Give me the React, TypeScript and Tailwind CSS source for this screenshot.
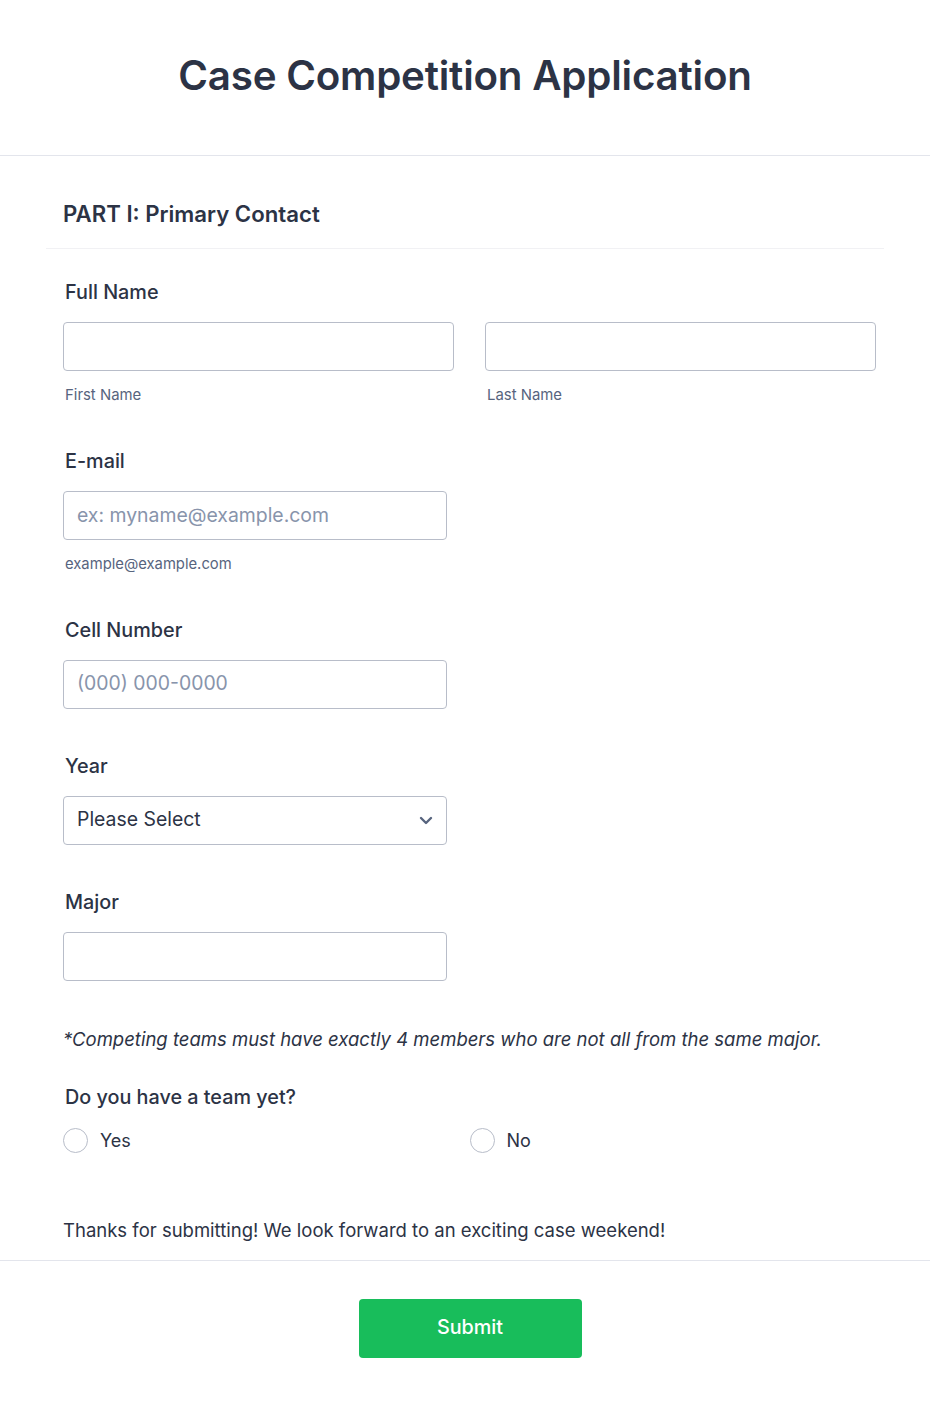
import React from "react";

const font = { fontFamily: "Inter, 'Noto Sans', sans-serif" };

function Label({ children }: { children: React.ReactNode }) {
  return <div className="text-[19.8px] font-medium text-[#2c3345] leading-[24px] pl-[2px]">{children}</div>;
}

function Input({ placeholder, className = "" }: { placeholder?: string; className?: string }) {
  return (
    <div
      className={`h-[49px] border border-[#b8bdc9] rounded-[4px] bg-white flex items-center px-[13px] text-[19.4px] text-[#8894ab] ${className}`}
    >
      {placeholder}
    </div>
  );
}

function Radio({ label }: { label: string }) {
  return (
    <div className="flex items-center gap-[12px]">
      <div className="w-[25px] h-[25px] rounded-full border border-[#b8bdc9] bg-white" />
      <span className="text-[18px] text-[#2c3345]">{label}</span>
    </div>
  );
}

export default function App() {
  return (
    <div className="w-[930px] min-h-[1407px] bg-white" style={font}>
      <div className="h-[156px] border-b border-[#e3e5ec] flex items-center justify-center">
        <h1 className="text-[40.3px] font-semibold text-[#2c3345] tracking-[-0.2px] -mt-[3px]">
          Case Competition Application
        </h1>
      </div>

      <div className="px-[46px]">
        <div className="h-[93px] border-b border-[#f1f1f4] flex items-end pb-[18px] pl-[17px]">
          <div className="text-[22.2px] font-semibold text-[#2c3345]">PART I: Primary Contact</div>
        </div>

        <div className="px-[17px]">
          {/* Full Name */}
          <div className="pt-[31px]">
            <Label>Full Name</Label>
            <div className="grid grid-cols-2 gap-[31px] mt-[18px] w-[813px]">
              <div>
                <Input />
                <div className="text-[14.9px] text-[#57647e] mt-[13px] pl-[2px]">First Name</div>
              </div>
              <div>
                <Input />
                <div className="text-[14.9px] text-[#57647e] mt-[13px] pl-[2px]">Last Name</div>
              </div>
            </div>
          </div>

          {/* Email */}
          <div className="pt-[43px]">
            <Label>E-mail</Label>
            <Input className="w-[384px] mt-[18px]" placeholder="ex: myname@example.com" />
            <div className="text-[14.8px] text-[#57647e] mt-[13px] pl-[2px]">example@example.com</div>
          </div>

          {/* Cell */}
          <div className="pt-[42px]">
            <Label>Cell Number</Label>
            <Input className="w-[384px] mt-[18px]" placeholder="(000) 000-0000" />
          </div>

          {/* Year */}
          <div className="pt-[45px]">
            <Label>Year</Label>
            <div className="w-[384px] mt-[18px] h-[49px] border border-[#b8bdc9] rounded-[4px] bg-white flex items-center justify-between px-[13px] text-[19.4px] text-[#2c3345]">
              <span>Please Select</span>
              <svg width="14" height="9" viewBox="0 0 14 9">
                <path d="M2 2 L7 7 L12 2" fill="none" stroke="#57647e" strokeWidth="2.4" strokeLinecap="round" strokeLinejoin="round" />
              </svg>
            </div>
          </div>

          {/* Major */}
          <div className="pt-[45px]">
            <Label>Major</Label>
            <Input className="w-[384px] mt-[18px]" />
          </div>

          {/* Note */}
          <div className="pt-[46px] text-[18.5px] italic text-[#2c3345] leading-[24px]">
            *Competing teams must have exactly 4 members who are not all from the same major.
          </div>

          {/* Team */}
          <div className="pt-[34px]">
            <Label>Do you have a team yet?</Label>
            <div className="grid grid-cols-2 mt-[18px] w-[813px]">
              <Radio label="Yes" />
              <Radio label="No" />
            </div>
          </div>

          <div className="pt-[64px] pb-[18px] text-[18.5px] text-[#2c3345] leading-[24px]">
            Thanks for submitting! We look forward to an exciting case weekend!
          </div>
        </div>
      </div>

      <div className="border-t border-[#e3e5ec] flex justify-center pt-[38px] pl-[10px]">
        <button className="w-[223px] h-[59px] rounded-[4px] bg-[#18bd5b] text-white text-[19.8px] font-medium">
          Submit
        </button>
      </div>
    </div>
  );
}
